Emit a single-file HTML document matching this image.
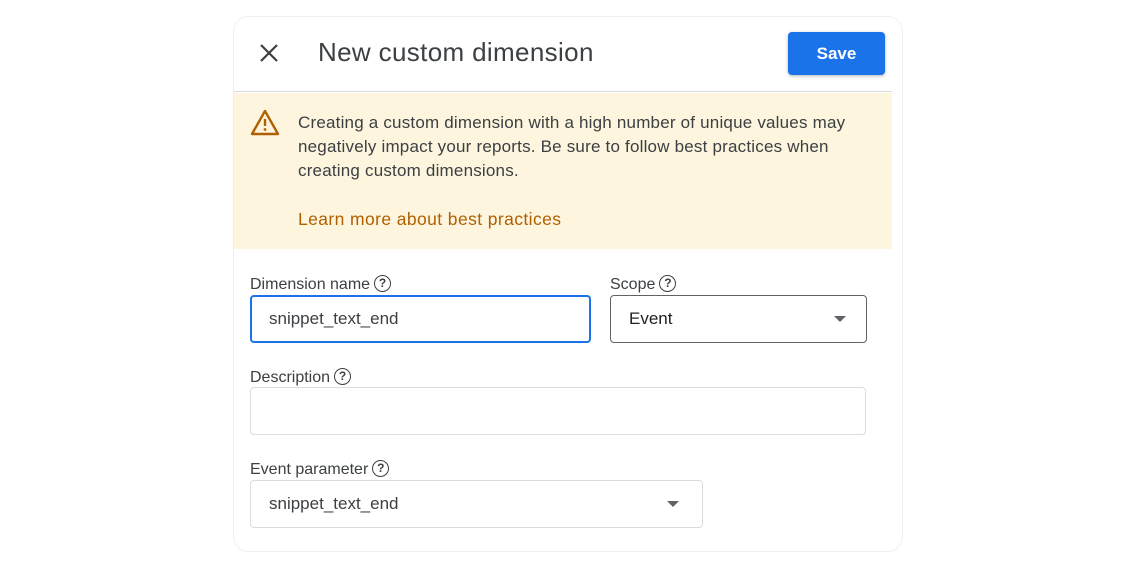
<!DOCTYPE html>
<html><head><style>
*{margin:0;padding:0;box-sizing:border-box}
body{width:1136px;height:568px;background:#fff;font-family:"Liberation Sans",sans-serif;position:relative;overflow:hidden;color:#3c4043}
.a{position:absolute;white-space:nowrap}
.card{position:absolute;left:233px;top:16px;width:670px;height:536px;border:1px solid #eceef0;border-radius:16px}
.lbl{font-size:16px;color:#3c4043}
.box{position:absolute;border:1px solid #dadce0;border-radius:4px}
.q{display:inline-block;width:17px;height:17px;border:1.6px solid #3c4043;border-radius:50%;font-size:12px;font-weight:bold;text-align:center;line-height:14px;vertical-align:2px;margin-left:4px}
.tri{position:absolute;width:0;height:0;border-left:6px solid transparent;border-right:6px solid transparent;border-top:6px solid #5f6368}
</style></head><body>
<div class="card"></div>
<svg class="a" style="left:259px;top:43px" width="20" height="20" viewBox="0 0 20 20"><path d="M2 2L18 18M18 2L2 18" stroke="#3c4043" stroke-width="2.2"/></svg>
<div class="a" style="left:318px;top:37px;font-size:26px;letter-spacing:0.35px;color:#3c4043">New custom dimension</div>
<div class="a" style="left:788px;top:32px;width:97px;height:43px;background:#1a73e8;border-radius:4px;color:#fff;font-size:17px;font-weight:bold;text-align:center;line-height:43px;box-shadow:0 1px 3px rgba(0,0,0,.3)">Save</div>
<div class="a" style="left:234px;top:91px;width:658px;height:1px;background:#dadce0"></div>
<div class="a" style="left:234px;top:93px;width:658px;height:156px;background:#fdf5de"></div>
<svg class="a" style="left:250px;top:108px" width="30" height="28" viewBox="0 0 30 28"><path d="M15 3L28 26H2Z" fill="none" stroke="#b06000" stroke-width="2.4" stroke-linejoin="round"/><path d="M15 11v7" stroke="#b06000" stroke-width="2.4"/><circle cx="15" cy="21.5" r="1.4" fill="#b06000"/></svg>
<div class="a" style="left:298px;top:111px;font-size:17px;letter-spacing:0.2px;line-height:24px;color:#3c4043">Creating a custom dimension with a high number of unique values may<br>negatively impact your reports. Be sure to follow best practices when<br>creating custom dimensions.</div>
<div class="a" style="left:298px;top:209px;font-size:17.5px;letter-spacing:0.4px;color:#b06000">Learn more about best practices</div>

<div class="a lbl" style="left:250px;top:275px">Dimension name<span class="q">?</span></div>
<div class="box" style="left:250px;top:295px;width:341px;height:48px;border:2px solid #1a73e8"></div>
<div class="a" style="left:269px;top:309px;font-size:17px">snippet_text_end</div>

<div class="a lbl" style="left:610px;top:275px">Scope<span class="q">?</span></div>
<div class="box" style="left:610px;top:295px;width:257px;height:48px;border:1.5px solid #5f6368"></div>
<div class="a" style="left:629px;top:309px;font-size:17px;color:#202124">Event</div>
<div class="tri" style="left:834px;top:316px"></div>

<div class="a lbl" style="left:250px;top:368px">Description<span class="q">?</span></div>
<div class="box" style="left:250px;top:387px;width:616px;height:48px"></div>

<div class="a lbl" style="left:250px;top:460px">Event parameter<span class="q">?</span></div>
<div class="box" style="left:250px;top:480px;width:453px;height:48px"></div>
<div class="a" style="left:269px;top:494px;font-size:17px">snippet_text_end</div>
<div class="tri" style="left:667px;top:501px"></div>
</body></html>
